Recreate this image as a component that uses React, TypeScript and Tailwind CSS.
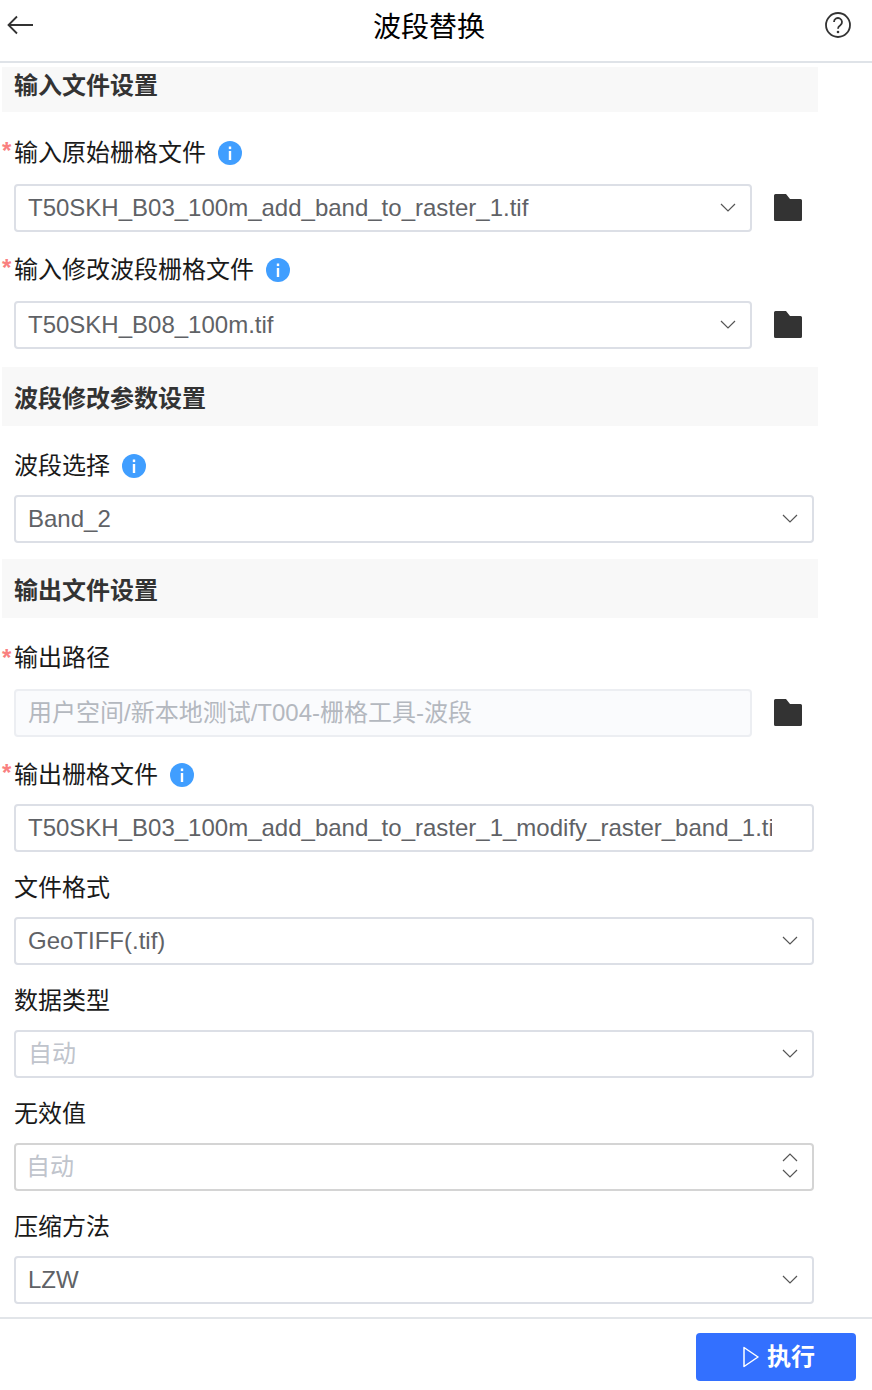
const font = '"Liberation Sans", "Noto Sans CJK SC", sans-serif';

const Chevron = ({ up = false }: { up?: boolean }) => (
  <svg width="16" height="9" viewBox="0 0 16 9" fill="none" className={up ? "rotate-180" : ""}>
    <path d="M1 1l7 7 7-7" stroke="#555" strokeWidth="1.200" />
  </svg>
);

const Info = () => (
  <svg width="24" height="24" viewBox="0 0 24 24" className="ml-3 shrink-0">
    <circle cx="12" cy="12" r="12" fill="#409eff" />
    <rect x="10.800" y="5.500" width="2.400" height="2.600" fill="#fff" />
    <rect x="10.800" y="10" width="2.400" height="9" fill="#fff" />
  </svg>
);

const Folder = () => (
  <svg width="28" height="28" viewBox="0 0 28 28" className="ml-[22px] mr-px shrink-0">
    <path
      d="M1.500 0h10.500l4 5h10.500a1.500 1.500 0 0 1 1.500 1.500v19a1.500 1.500 0 0 1-1.500 1.500h-25a1.500 1.500 0 0 1-1.500-1.500v-24a1.500 1.500 0 0 1 1.500-1.500z"
      fill="#333"
    />
  </svg>
);

const Section = ({ title, className }: { title: string; className: string }) => (
  <div className={`w-[816px] bg-[#f8f8f8] pl-3 font-bold text-2xl text-[#333] ${className}`}>{title}</div>
);

const Label = ({ text, required, info, className }: { text: string; required?: boolean; info?: boolean; className: string }) => (
  <div className={`relative flex items-center pl-3 pt-[2px] text-2xl text-[#1a1a1a] ${className}`}>
    {required && <span className="absolute left-0 top-[3px] text-2xl font-bold text-[#f98080]">*</span>}
    {text}
    {info && <Info />}
  </div>
);

const Box = ({ value, muted, disabled, narrow, children }: { value: string; muted?: boolean; disabled?: boolean; narrow?: boolean; children?: React.ReactNode }) => (
  <div className={`ml-3 flex h-12 items-center rounded border-2 pl-3 text-2xl ${narrow ? "w-[738px]" : "w-[800px]"} ${disabled ? "border-[#eceef2] bg-[#fafbfd]" : "border-[#dcdfe6] bg-white"} ${muted ? "text-[#c0c4cc]" : "text-[#606266]"}`}>
    <div className={`min-w-0 flex-1 overflow-hidden whitespace-nowrap ${disabled ? "text-[#b4b8bf]" : ""}`}>{value}</div>
    {children}
  </div>
);

const Select = ({ value, muted, narrow }: { value: string; muted?: boolean; narrow?: boolean }) => (
  <Box value={value} muted={muted} narrow={narrow}>
    <div className="mb-[2px] ml-10 mr-[14px]"><Chevron /></div>
  </Box>
);

export default function App() {
  return (
    <div className="flex h-[1390px] w-[872px] flex-col overflow-hidden bg-white" style={{ fontFamily: font }}>
      <header className="flex h-[63px] shrink-0 items-start justify-between border-b-2 border-[#dfe3e8] px-[6px]">
        <svg width="27" height="20" viewBox="0 0 27 20" fill="none" className="mt-[15px]">
          <path d="M27 10H2.500M11 1.500L2.500 10l8.500 8.500" stroke="#333" strokeWidth="1.800" />
        </svg>
        <div className="mt-[7px] text-[28px] leading-[42px] text-black">波段替换</div>
        <svg width="26" height="26" viewBox="0 0 26 26" fill="none" className="mr-[15px] mt-3">
          <circle cx="13" cy="13" r="12" stroke="#333" strokeWidth="1.800" />
          <path d="M9 10a4 4 0 1 1 6.300 3.300c-1.500 1-2.300 1.700-2.300 3.400" stroke="#333" strokeWidth="1.800" />
          <circle cx="13" cy="20" r="1.300" fill="#333" />
        </svg>
      </header>

      <main className="flex-1 pl-[2px]">
        <Section title="输入文件设置" className="mt-1 h-[45px] leading-[38px]" />
        <Label text="输入原始栅格文件" required info className="mt-5 mb-3 h-10" />
        <div className="flex items-center">
          <Select value="T50SKH_B03_100m_add_band_to_raster_1.tif" narrow />
          <Folder />
        </div>
        <Label text="输入修改波段栅格文件" required info className="mt-[17px] mb-3 h-10" />
        <div className="flex items-center">
          <Select value="T50SKH_B08_100m.tif" narrow />
          <Folder />
        </div>

        <Section title="波段修改参数设置" className="mt-[18px] h-[59px] leading-[64px]" />
        <Label text="波段选择" info className="mt-[21px] mb-3 h-9" />
        <Select value="Band_2" />

        <Section title="输出文件设置" className="mt-4 h-[59px] leading-[64px]" />
        <Label text="输出路径" required className="mt-[21px] mb-[14px] h-9" />
        <div className="flex items-center">
          <Box value="用户空间/新本地测试/T004-栅格工具-波段" disabled narrow />
          <Folder />
        </div>
        <Label text="输出栅格文件" required info className="mt-[17px] mb-[10px] h-10" />
        <Box value="T50SKH_B03_100m_add_band_to_raster_1_modify_raster_band_1.tif">
          <div className="w-10 shrink-0" />
        </Box>
        <Label text="文件格式" className="mt-[17px] mb-3 h-9" />
        <Select value="GeoTIFF(.tif)" />
        <Label text="数据类型" className="mt-[17px] mb-3 h-9" />
        <Select value="自动" muted />
        <Label text="无效值" className="mt-[17px] mb-3 h-9" />
        <div className="ml-3 flex h-12 w-[800px] items-center rounded border-2 border-[#d4d4d4] bg-white pl-[10px] text-2xl text-[#c0c4cc]">
          <div className="flex-1">自动</div>
          <div className="mb-[3px] mr-[14px] flex flex-col gap-[7px]"><Chevron up /><Chevron /></div>
        </div>
        <Label text="压缩方法" className="mt-[17px] mb-3 h-9" />
        <Select value="LZW" />
      </main>

      <footer className="flex h-[73px] shrink-0 items-start justify-end border-t-2 border-[#e2e5e9] pr-4 pt-[14px]">
        <button className="flex h-12 w-40 items-center justify-center gap-2 rounded bg-[#3370ff] pl-[6px] text-2xl font-bold text-white">
          <svg width="16" height="22" viewBox="0 0 16 22" fill="none">
            <path d="M1 1.500v19l14-9.500z" stroke="#fff" strokeWidth="1.500" strokeLinejoin="round" />
          </svg>
          执行
        </button>
      </footer>
    </div>
  );
}
